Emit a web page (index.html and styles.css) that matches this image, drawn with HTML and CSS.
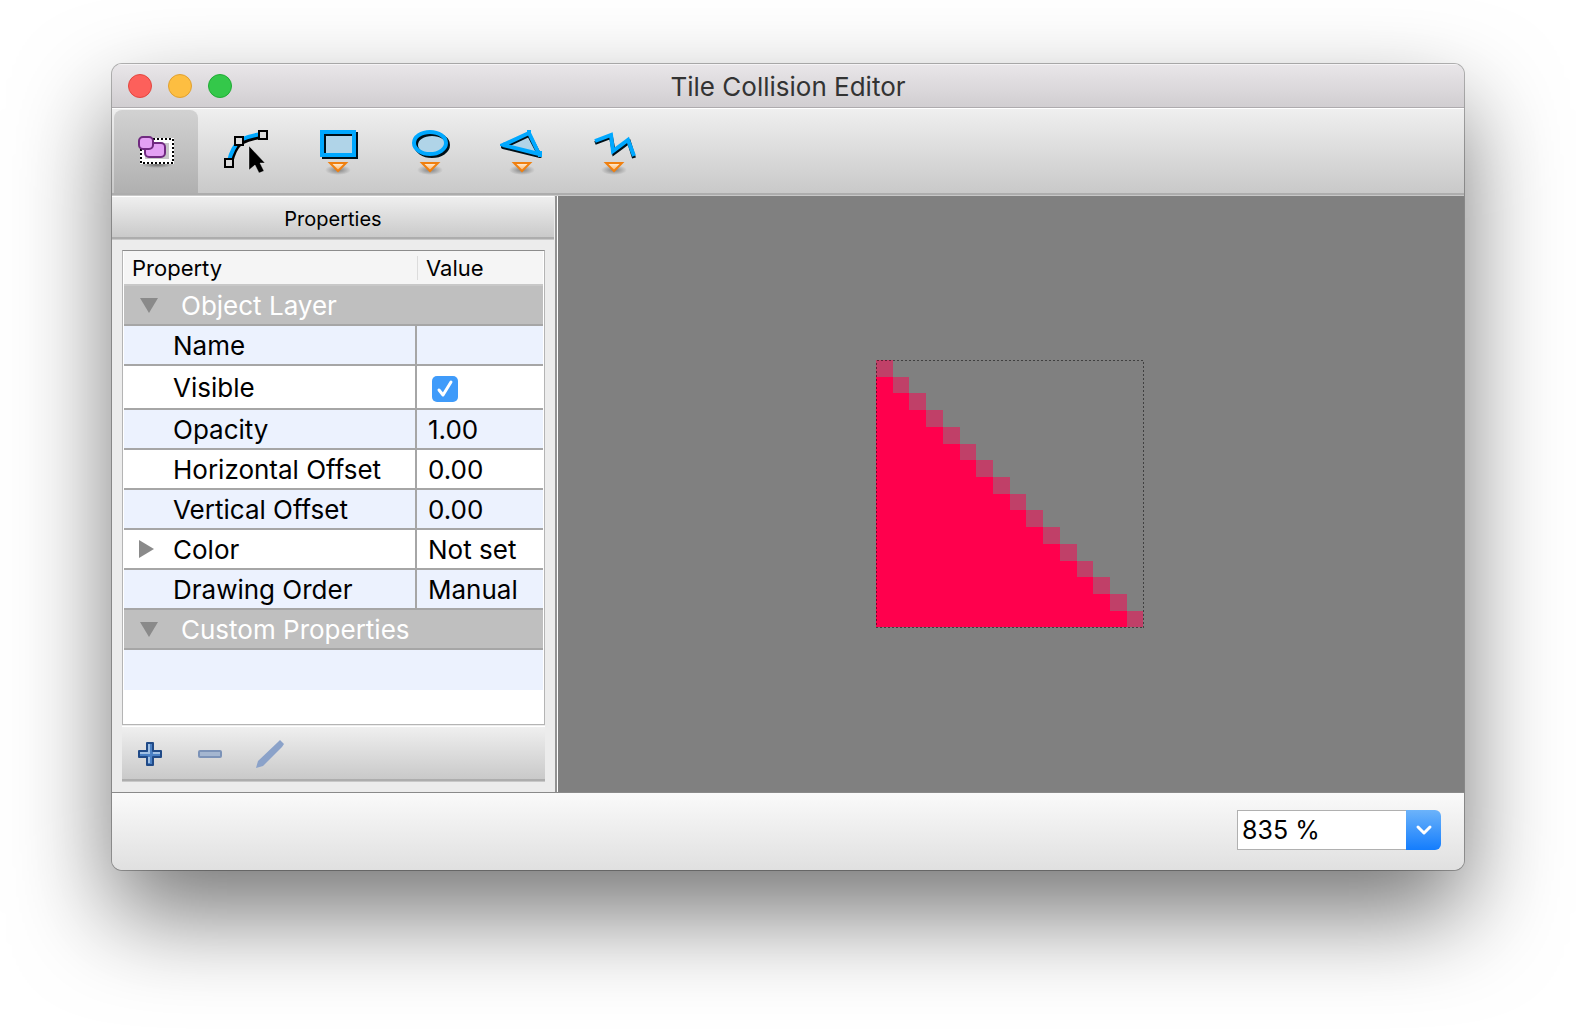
FILE: index.html
```
<!DOCTYPE html>
<html lang="en">
<head>
<meta charset="utf-8">
<title>Tile Collision Editor</title>
<link rel="stylesheet" href="styles.css">
</head>
<body>
<main class="window">
  <header class="titlebar">
    <div class="lights">
      <button class="light close" aria-label="Close"></button>
      <button class="light minimize" aria-label="Minimize"></button>
      <button class="light maximize" aria-label="Maximize"></button>
    </div>
    <h1 class="title">Tile Collision Editor</h1>
    <div class="lights-spacer"></div>
  </header>

  <nav class="toolbar bar" aria-label="Tools">
    <button class="tool active" aria-label="Select Objects">
      <svg width="44" height="48" viewBox="0 0 44 48">
        <ellipse cx="23" cy="37" rx="16" ry="3" fill="url(#shade)"/>
        <path d="M9 13h28v20H9z" fill="#c8c8c8" stroke="#fff" stroke-width="4"/>
        <path d="M7 11h32v24H7z" fill="none" stroke="#fff" stroke-width="2"/>
        <path d="M7 11h32v24H7z" fill="none" stroke="#000" stroke-width="2" stroke-dasharray="2 2"/>
        <rect x="11" y="15" width="20" height="14" rx="4" fill="#e4a0f4" stroke="#702a80" stroke-width="2"/>
        <rect x="5" y="9" width="14" height="12" rx="4" fill="#e4a0f4" stroke="#702a80" stroke-width="2"/>
      </svg>
    </button>
    <button class="tool" aria-label="Edit Polygons">
      <svg width="44" height="48" viewBox="0 0 44 48">
        <path d="M5 35Q8 21 15 15Q26 9 38 9" fill="none" stroke="#000" stroke-width="4"/>
        <path d="M3 33Q6 20 14 12Q25 7 37 6" fill="none" stroke="#00a8ff" stroke-width="4"/>
        <g fill="#dcdcdc" stroke="#000" stroke-width="2"><path d="M-1 31h8v8h-8zM9 9h8v8H9zM33 3h8v8h-8z"/></g>
        <path d="M23 18v24l6-5 4 8 5-2-4-8h5z" fill="#000" stroke="#fff" stroke-opacity=".35"/>
      </svg>
    </button>
    <button class="tool" aria-label="Insert Rectangle">
      <svg width="44" height="48" viewBox="0 0 44 48">
        <path d="M4 4h32v23H4z" fill="#b0d4e8"/>
        <path d="M6 6h32v23H6z" fill="none" stroke="#001018" stroke-width="4"/>
        <path d="M4 4h32v23H4z" fill="none" stroke="#00a8ff" stroke-width="4"/>
        <use href="#marker"/>
      </svg>
    </button>
    <button class="tool" aria-label="Insert Ellipse">
      <svg width="44" height="48" viewBox="0 0 44 48">
        <ellipse cx="20" cy="15" rx="16" ry="11" fill="#b0d4e8"/>
        <ellipse cx="22" cy="17" rx="16" ry="11" fill="none" stroke="#001018" stroke-width="4"/>
        <ellipse cx="20" cy="15" rx="16" ry="11" fill="none" stroke="#00a8ff" stroke-width="4"/>
        <use href="#marker"/>
      </svg>
    </button>
    <button class="tool" aria-label="Insert Polygon">
      <svg width="44" height="48" viewBox="0 0 44 48">
        <path d="M1 17L27 5L37 26z" fill="#b0d4e8"/>
        <path d="M1 19L27 7L38 28z" fill="none" stroke="#001018" stroke-width="4" stroke-linejoin="round"/>
        <path d="M1 17L27 5L37 26z" fill="none" stroke="#00a8ff" stroke-width="4" stroke-linejoin="bevel"/>
        <path d="M-2 16l5-2v5l-5-1zM36 23h4v6h-4zM25 2h4v4h-4z" fill="#00a8ff"/>
        <use href="#marker"/>
      </svg>
    </button>
    <button class="tool" aria-label="Insert Polyline">
      <svg width="44" height="48" viewBox="0 0 44 48">
        <path d="M1 15L17 9L20 25L35 14L40 30" fill="none" stroke="#001018" stroke-width="4"/>
        <path d="M1 13L17 7L19 23L34 12L40 28" fill="none" stroke="#00a8ff" stroke-width="4"/>
        <use href="#marker"/>
      </svg>
    </button>
  </nav>

  <div class="workspace">
    <aside class="dock">
      <h2 class="dock-title bar">Properties</h2>
      <div class="dock-body">
        <div class="tree">
          <table class="properties">
            <colgroup><col class="col-name"><col></colgroup>
            <thead><tr><th scope="col">Property</th><th scope="col"><span class="value-head">Value</span></th></tr></thead>
            <tbody>
              <tr class="group"><th colspan="2" scope="colgroup"><span class="arrow down"></span>Object Layer</th></tr>
              <tr class="alt"><td>Name</td><td></td></tr>
              <tr class="tall"><td><label for="visible">Visible</label></td><td><input class="check" id="visible" type="checkbox" checked></td></tr>
              <tr class="alt"><td>Opacity</td><td>1.00</td></tr>
              <tr><td>Horizontal Offset</td><td>0.00</td></tr>
              <tr class="alt"><td>Vertical Offset</td><td>0.00</td></tr>
              <tr><td class="expandable"><span class="arrow right"></span>Color</td><td>Not set</td></tr>
              <tr class="alt"><td>Drawing Order</td><td>Manual</td></tr>
              <tr class="group"><th colspan="2" scope="colgroup"><span class="arrow down"></span>Custom Properties</th></tr>
              <tr class="alt blank"><td colspan="2"></td></tr>
            </tbody>
          </table>
        </div>
        <div class="actions bar">
          <button class="action" aria-label="Add Property">
            <svg width="32" height="32" viewBox="0 0 32 32"><path d="M13 5h6v8h8v6h-8v8h-6v-8H5v-6h8z" fill="#4a80c4" stroke="#204a87" stroke-width="2" stroke-linejoin="round"/><path d="M15 6v9H6M19 15h7M15 19v6" fill="none" stroke="#a0c0e4" stroke-width="2"/></svg>
          </button>
          <button class="action" aria-label="Remove Property" disabled>
            <svg width="32" height="32" viewBox="0 0 32 32"><rect x="5" y="13" width="22" height="6" rx="1" fill="#a4b6d0" stroke="#7c93b8" stroke-width="2"/></svg>
          </button>
          <button class="action" aria-label="Rename Property" disabled>
            <svg width="32" height="32" viewBox="0 0 32 32"><path d="M2 30l2-7L24 4l2-2 4 4-2 3L9 28z" fill="#8ba2c9"/></svg>
          </button>
        </div>
      </div>
    </aside>
    <section class="canvas" aria-label="Tile">
      <svg class="tile" width="268" height="268" viewBox="0 0 268 268" shape-rendering="crispEdges">
        <path fill="#ff004d" d="M0 17h17v16h16v17h17v17h17v17h17v16h16v17h17v17h17v16h16v17h17v17h17v17h17v16h16v17h17v17h17v16H0z"/>
        <path fill="#c04068" d="M0 0h17v17H0zM17 17h16v16H17zM33 33h17v17H33zM50 50h17v17H50zM67 67h17v17H67zM84 84h16v16H84zM100 100h17v17h-17zM117 117h17v17h-17zM134 134h16v16h-16zM150 150h17v17h-17zM167 167h17v17h-17zM184 184h17v17h-17zM201 201h16v16h-16zM217 217h17v17h-17zM234 234h17v17h-17zM251 251h16v16h-16z"/>
        <path d="M.5 .5h267v267H.5z" fill="none" stroke="#000" stroke-opacity=".5" stroke-dasharray="2 2"/>
      </svg>
    </section>
  </div>

  <footer class="statusbar">
    <div class="zoom">
      <input class="zoom-value" type="text" value="835 %" aria-label="Zoom">
      <button class="zoom-toggle" aria-label="Zoom levels"><svg width="16" height="10" viewBox="0 0 16 10"><path d="M2 2l6 6 6-6" fill="none" stroke="#fff" stroke-width="3" stroke-linecap="round" stroke-linejoin="round"/></svg></button>
    </div>
  </footer>
</main>

<svg class="symbols" width="0" height="0" aria-hidden="true">
  <defs>
    <radialGradient id="shade"><stop offset="0" stop-opacity=".4"/><stop offset="1" stop-opacity="0"/></radialGradient>
    <linearGradient id="amber" x2="0" y2="1"><stop offset="0" stop-color="#fff0dc"/><stop offset="1" stop-color="#fbb060"/></linearGradient>
    <g id="marker">
      <ellipse cx="20" cy="42" rx="13" ry="5" fill="url(#shade)"/>
      <path d="M12 35h16l-8 8z" fill="url(#amber)" stroke="#f08010" stroke-width="2"/>
    </g>
  </defs>
</svg>
</body>
</html>
```
FILE: styles.css
```
* { box-sizing: border-box; }

body {
  display: flex;
  min-height: 100vh;
  margin: 0;
  padding: 64px 112px 160px;
  background: #fff;
  color: #000;
  font-family: Inter, "Liberation Sans", sans-serif;
  font-size: 26px;
}

button { padding: 0; border: 0; background: none; font: inherit; }
button svg { display: block; overflow: visible; }
.symbols { position: absolute; }

.window {
  display: flex;
  flex: 1;
  flex-direction: column;
  overflow: hidden;
  border-radius: 10px;
  background: #ececec;
  box-shadow: 0 0 0 1px rgba(0, 0, 0, .28), 0 44px 96px rgba(0, 0, 0, .54);
}

.titlebar {
  display: flex;
  align-items: center;
  height: 44px;
  padding: 0 16px;
  border-bottom: 1px solid #aeabae;
  background: linear-gradient(#e9e6e9, #d1ced1);
  box-shadow: inset 0 1px #f5f3f5;
}
.lights, .lights-spacer { display: flex; gap: 16px; width: 104px; }
.light { width: 24px; height: 24px; border: 1px solid; border-radius: 50%; }
.close { border-color: #e2463f; background: #fd605b; }
.minimize { border-color: #e0a030; background: #fdbe41; }
.maximize { border-color: #20ab35; background: #34c84a; }
.title { flex: 1; margin: 0; padding-top: 2px; color: #333; font-size: 26px; font-weight: 400; line-height: 32px; text-align: center; }

/* Raised strip shared by the toolbar, the dock title and the action row */
.bar {
  border-top: 1px solid #fff;
  border-bottom: 1px solid #c8c8c8;
  background: linear-gradient(#efefef, #c8c8c8);
  box-shadow: inset 0 -2px #adadad;
}

.toolbar {
  display: flex;
  gap: 8px;
  height: 88px;
  padding: 1px 2px 2px;
}
.tool { display: flex; justify-content: center; width: 84px; padding-top: 18px; border-radius: 8px 8px 0 0; }
.active { background: linear-gradient(#d2d2d2, #b0b0b0); }

.workspace { display: flex; flex: 1; }
.dock { display: flex; flex-direction: column; width: 446px; padding-right: 3px; border-right: 1px solid #fff; box-shadow: inset -2px 0 #929292; }
.dock-title {
  height: 44px;
  margin: 0;
  padding-top: 1px;
  font-size: 20px;
  font-weight: 400;
  line-height: 42px;
  text-align: center;
}
.dock-body { display: flex; flex: 1; flex-direction: column; padding: 10px 9px 10px 10px; }
.tree { flex: 1; padding: 0 1px; border: 1px solid #b4b4b4; border-top-color: #8c8c8c; background: #fff; }
.properties { width: 100%; border-collapse: separate; border-spacing: 0; table-layout: fixed; }
.properties th, .properties td { padding: 0; font-weight: 400; text-align: left; white-space: nowrap; }
.col-name { width: 293px; }
.properties thead th { height: 35px; padding-left: 8px; border-bottom: 2px solid #c8c8c8; background: #f5f5f5; font-size: 22px; }
.properties thead th:last-child { padding-left: 0; }
.value-head { display: block; padding-left: 8px; border-left: 1px solid #dcdcdc; line-height: 24px; }
.properties td { height: 40px; padding: 1px 0 0 11px; border-bottom: 2px solid #a6a6a6; line-height: 32px; }
.properties td:first-child { padding-left: 49px; border-right: 2px solid #a6a6a6; }
.alt { background: #ecf2fe; }
.properties .tall td { height: 44px; }
.properties .group th { height: 40px; padding-top: 1px; border-bottom: 2px solid #a6a6a6; background: #bfbfbf; color: #fff; line-height: 32px; }
.properties .blank td { border: 0; }
.arrow { display: inline-block; vertical-align: middle; }
.down { margin: 0 23px 4px 16px; border: 9px solid transparent; border-top: 15px solid #8a8a8a; border-bottom: 0; }
.right { margin: 0 19px 4px 0; border: 9px solid transparent; border-left: 15px solid #8a8a8a; border-right: 0; }
.properties td.expandable { padding-left: 15px; }

.check { display: block; width: 26px; height: 26px; margin: 3px 0 0 4px; border-radius: 5px; appearance: none; background: #3f9bfa url("data:image/svg+xml,%3Csvg xmlns='http://www.w3.org/2000/svg' viewBox='0 0 26 26'%3E%3Cpath d='M7 14l4 5 8-13' fill='none' stroke='white' stroke-width='3' stroke-linecap='round' stroke-linejoin='round'/%3E%3C/svg%3E"); }

.actions {
  display: flex;
  gap: 28px;
  align-items: center;
  height: 56px;
  margin-top: 1px;
  padding-left: 12px;
}

.canvas { display: grid; flex: 1; place-items: center; padding-right: 2px; background: #808080; }
.tile { display: block; }

.statusbar {
  display: flex;
  align-items: center;
  justify-content: flex-end;
  height: 78px;
  padding: 0 23px 4px;
  border-top: 1px solid #8a8a8a;
  background: linear-gradient(#fafafa, #e0e0e0);
}
.zoom { display: flex; width: 204px; height: 40px; }
.zoom-value { flex: 1; min-width: 0; padding: 0 4px; border: 1px solid #b0b0b0; border-right: 0; border-radius: 0; background: #fff; color: #000; font: inherit; font-size: 25px; }
.zoom-toggle { display: grid; place-items: center; width: 35px; border-radius: 0 6px 6px 0; background: linear-gradient(#6cb3fa, #147dfd); }
```
